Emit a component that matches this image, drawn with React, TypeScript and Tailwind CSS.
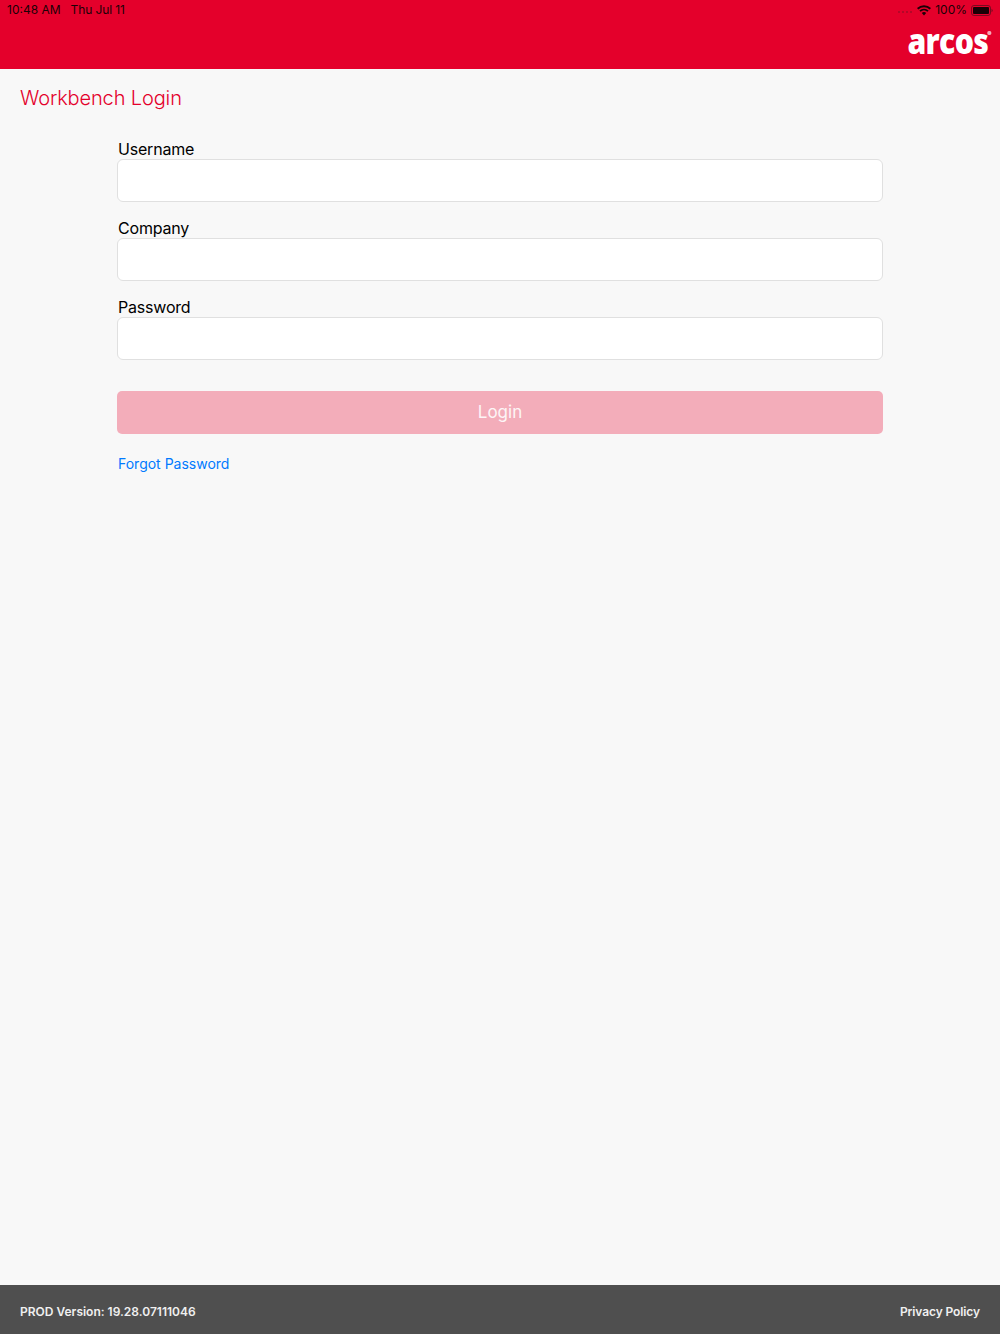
const font = { fontFamily: "Inter, 'Liberation Sans', sans-serif" };

function Field({ label }: { label: string }) {
  return (
    <div className="flex flex-col">
      <label className="h-[20px] pl-[1px] text-[16px] leading-[20px] tracking-[-0.2px] text-black">{label}</label>
      <div className="h-[43px] rounded-[6px] border border-[#e0e0e0] bg-white" />
    </div>
  );
}

export default function App() {
  return (
    <div className="flex h-[1334px] w-[1000px] flex-col bg-[#f8f8f8]" style={font}>
      <header className="h-[69px] shrink-0 bg-[#e4002b] pl-[7px] pr-[7px]">
        <div className="flex h-[20px] items-center justify-between text-[12px] leading-[20px] text-[#1a0006]">
          <div className="flex gap-[10px]">
            <span>10:48 AM</span>
            <span className="tracking-[-0.1px]">Thu Jul 11</span>
          </div>
          <div className="flex items-center">
            <span className="mr-[5px] mt-[3px] flex gap-[2px]">
              <i className="h-[2px] w-[2px] rounded-full bg-[#a50a28]" />
              <i className="h-[2px] w-[2px] rounded-full bg-[#a50a28]" />
              <i className="h-[2px] w-[2px] rounded-full bg-[#a50a28]" />
              <i className="h-[2px] w-[2px] rounded-full bg-[#a50a28]" />
            </span>
            <svg width="14" height="11" viewBox="0 0 14 11" className="mr-[4px]">
              <path d="M7 10.5 4.8 8a3.2 3.2 0 0 1 4.4 0z" fill="#1a0006" />
              <path d="M3.6 6.8a5 5 0 0 1 6.8 0l1.2-1.3a6.8 6.8 0 0 0-9.2 0z" fill="#1a0006" />
              <path d="M1.3 4.4a8.4 8.4 0 0 1 11.4 0L14 3.1a10.2 10.2 0 0 0-14 0z" fill="#1a0006" />
            </svg>
            <span className="mr-[4px]">100%</span>
            <svg width="22" height="11" viewBox="0 0 22 11">
              <rect x="0.5" y="0.5" width="19" height="10" rx="2.5" fill="none" stroke="#7a0a20" />
              <rect x="2" y="2" width="16" height="7" rx="1" fill="#1a0006" />
              <path d="M20.5 3.8a1.8 1.8 0 0 1 0 3.4z" fill="#7a0a20" />
            </svg>
          </div>
        </div>
        <div className="mt-[3px] flex justify-end pr-[5px]">
          <span
            className="relative origin-right scale-x-[0.84] text-[36px] font-extrabold leading-[36px] tracking-[-0.8px] text-white"
            style={{ fontFamily: "'Open Sans', sans-serif" }}
          >
            arcos
            <i className="absolute right-[-4px] top-[8px] h-[4px] w-[5px] rounded-full bg-[#f6a9b8]" />
          </span>
        </div>
      </header>

      <main className="flex-1">
        <h1 className="pl-[20px] pt-[15px] text-[20px] font-light leading-[28px] tracking-[-0.13px] text-[#e4002b]">Workbench Login</h1>
        <form className="mx-[117px] mt-[27px] flex flex-col gap-[15.75px]">
          <Field label="Username" />
          <Field label="Company" />
          <Field label="Password" />
        </form>
        <div className="mx-[117px] mt-[31.5px] flex h-[42.5px] items-center justify-center rounded-[5px] bg-[#f3adba] pt-[1.5px] text-[17px] text-[#fdf5f6]">
          Login
        </div>
        <a className="mx-[117px] mt-[19.5px] block pl-[1px] text-[14px] leading-[22px] text-[#007aff]">Forgot Password</a>
      </main>

      <footer className="flex h-[49px] shrink-0 items-center justify-between bg-[#4f4f4f] px-[20px] pt-[5px] text-[12px] font-semibold text-[#f0f0f0]">
        <span>PROD Version: 19.28.07111046</span>
        <span className="tracking-[-0.1px]">Privacy Policy</span>
      </footer>
    </div>
  );
}
